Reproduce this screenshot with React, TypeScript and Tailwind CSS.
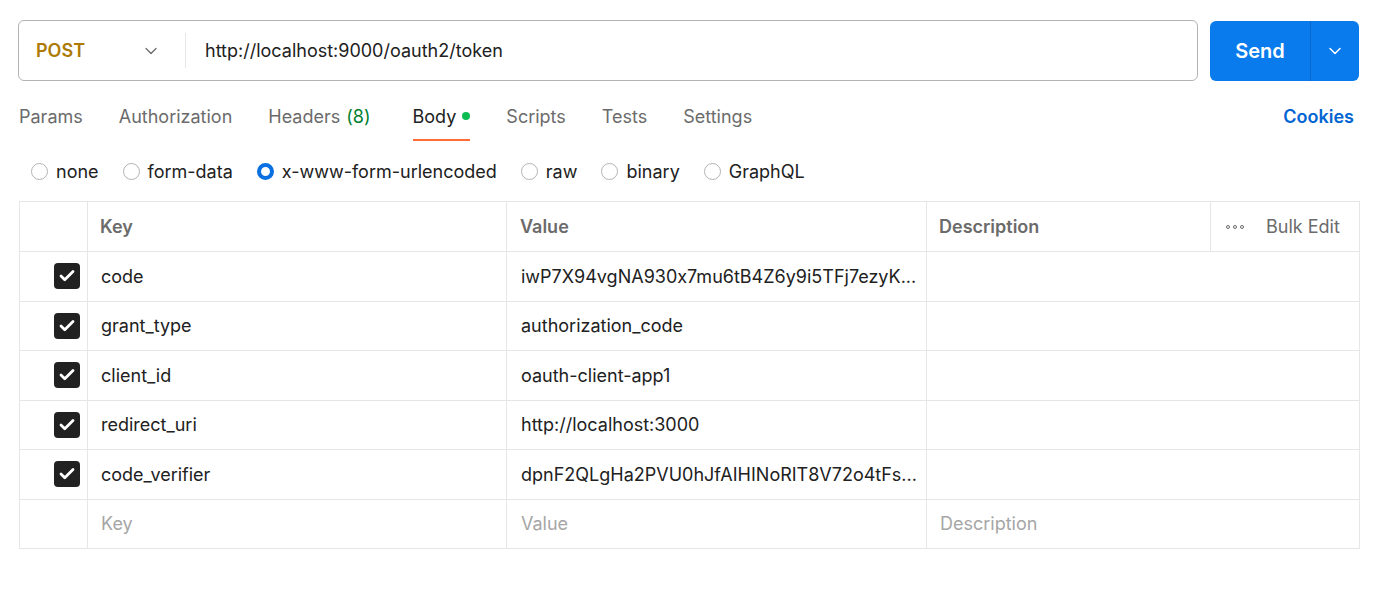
import { ChevronDown, Check } from "lucide-react";

const tabs: Array<{ label: string; count?: string; active?: boolean; dot?: boolean }> = [
  { label: "Params" },
  { label: "Authorization" },
  { label: "Headers", count: "(8)" },
  { label: "Body", active: true, dot: true },
  { label: "Scripts" },
  { label: "Tests" },
  { label: "Settings" },
];

const bodyTypes = ["none", "form-data", "x-www-form-urlencoded", "raw", "binary", "GraphQL"];

const rows = [
  { key: "code", value: "iwP7X94vgNA930x7mu6tB4Z6y9i5TFj7ezyK..." },
  { key: "grant_type", value: "authorization_code" },
  { key: "client_id", value: "oauth-client-app1" },
  { key: "redirect_uri", value: "http://localhost:3000" },
  { key: "code_verifier", value: "dpnF2QLgHa2PVU0hJfAIHINoRIT8V72o4tFs..." },
];

function Radio({ checked }: { checked?: boolean }) {
  return checked ? (
    <span className="w-[17px] h-[17px] rounded-full border-[4px] border-[#0a6fe0] bg-white" />
  ) : (
    <span className="w-[17px] h-[17px] rounded-full border border-[#b3b3b3] bg-white" />
  );
}

export default function App() {
  return (
    <div
      className="w-[1377px] h-[589px] bg-white px-[18px] pt-[20px] text-[18px] text-[#212121] [font-feature-settings:'calt'_0]"
      style={{ fontFamily: "Inter, 'Noto Sans', sans-serif" }}
    >
      {/* request bar */}
      <div className="flex items-center gap-3">
        <div className="flex-1 h-[61px] flex items-center border border-[#b3b3b3] rounded-[6px]">
          <div className="w-[166px] flex items-center justify-between pl-[17px] pr-[24px]">
            <span className="font-semibold text-[#ad7a03]">POST</span>
            <ChevronDown size={20} strokeWidth={1.5} className="text-[#6b6b6b]" />
          </div>
          <div className="w-px h-[35px] bg-[#e6e6e6]" />
          <span className="pl-[19px]">http://localhost:9000/oauth2/token</span>
        </div>
        <div className="w-[149px] h-[60px] flex rounded-[6px] bg-[#097bed] text-white">
          <div className="flex-1 flex items-center justify-center text-[20px] font-semibold border-r border-[#0868cc]">
            Send
          </div>
          <div className="w-[48px] flex items-center justify-center">
            <ChevronDown size={20} strokeWidth={1.75} />
          </div>
        </div>
      </div>

      {/* tabs */}
      <div className="flex items-stretch justify-between h-[60px] pl-px">
        <div className="flex items-stretch gap-9">
          {tabs.map((t) => (
            <div
              key={t.label}
              className={`flex items-center gap-[6px] pt-[12px] border-b-2 ${
                t.active ? "ml-[6px] border-[#ff6c37] text-[#212121]" : "border-transparent text-[#6b6b6b]"
              }`}
            >
              <span>{t.label}</span>
              {t.count && <span className="text-[#007f31]">{t.count}</span>}
              {t.dot && <span className="w-[8px] h-[8px] rounded-full bg-[#0cbb52]" />}
            </div>
          ))}
        </div>
        <span className="flex items-center pt-[12px] pb-[2px] font-semibold text-[#0265d2] pr-[5px]">Cookies</span>
      </div>

      {/* body types */}
      <div className="flex items-center gap-6 h-[60px] pl-[13px]">
        {bodyTypes.map((b) => (
          <label key={b} className="flex items-center gap-[8px]">
            <Radio checked={b === "x-www-form-urlencoded"} />
            <span>{b}</span>
          </label>
        ))}
      </div>

      {/* table */}
      <div className="ml-px -mr-px border border-[#e6e6e6]">
        <div className="flex h-[49px] font-semibold text-[#6b6b6b]">
          <div className="w-[68px] border-r border-[#e6e6e6]" />
          <div className="w-[419px] flex items-center pl-[12px] border-r border-[#e6e6e6]">Key</div>
          <div className="w-[420px] flex items-center pl-[13px] border-r border-[#e6e6e6]">Value</div>
          <div className="w-[284px] flex items-center pl-[12px] border-r border-[#e6e6e6]">Description</div>
          <div className="flex-1 flex items-center gap-[22px] pl-[15px] font-normal">
            <span className="flex gap-[3px]">
              <span className="w-[4px] h-[4px] rounded-full border border-[#6b6b6b]" />
              <span className="w-[4px] h-[4px] rounded-full border border-[#6b6b6b]" />
              <span className="w-[4px] h-[4px] rounded-full border border-[#6b6b6b]" />
            </span>
            <span>Bulk Edit</span>
          </div>
        </div>
        {rows.map((r) => (
          <div key={r.key} className="flex h-[49.5px] border-t border-[#e6e6e6]">
            <div className="w-[68px] flex items-center justify-end pr-[7px] border-r border-[#e6e6e6]">
              <span className="w-[26px] h-[26px] rounded-[4px] bg-[#212121] flex items-center justify-center">
                <Check size={18} strokeWidth={3.75} className="text-white" />
              </span>
            </div>
            <div className="w-[419px] flex items-center pl-[13px] border-r border-[#e6e6e6]">{r.key}</div>
            <div className="w-[420px] flex items-center pl-[14px] border-r border-[#e6e6e6] whitespace-nowrap overflow-hidden">
              {r.value}
            </div>
            <div className="flex-1" />
          </div>
        ))}
        <div className="flex h-[49.5px] border-t border-[#e6e6e6] text-[#a6a6a6]">
          <div className="w-[68px] border-r border-[#e6e6e6]" />
          <div className="w-[419px] flex items-center pl-[13px] border-r border-[#e6e6e6]">Key</div>
          <div className="w-[420px] flex items-center pl-[14px] border-r border-[#e6e6e6]">Value</div>
          <div className="flex-1 flex items-center pl-[13px]">Description</div>
        </div>
      </div>
    </div>
  );
}
